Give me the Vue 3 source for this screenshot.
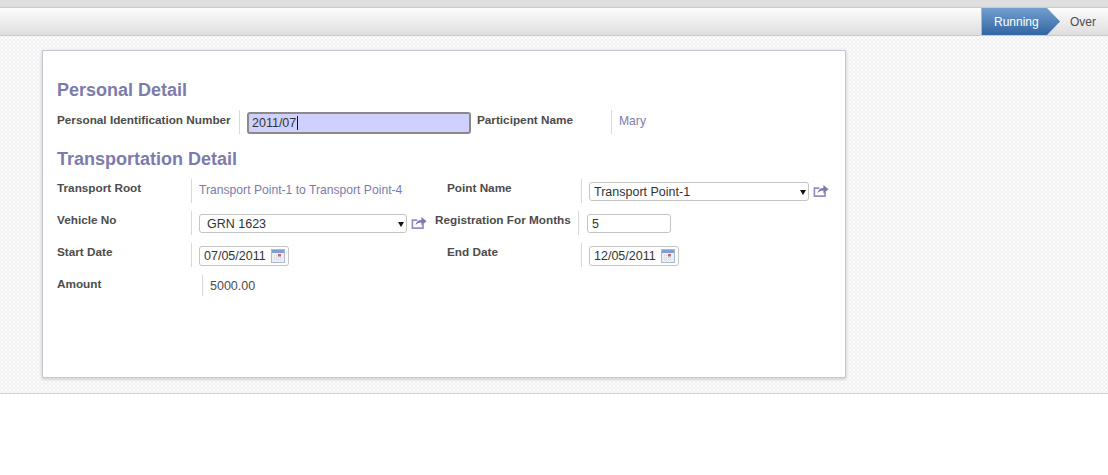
<template>
  <div class="page">
    <div class="topline"></div>
    <header class="statusbar">
      <ul class="steps">
        <li class="step active">Running</li>
        <li class="step">Over</li>
      </ul>
    </header>

    <main class="sheet-wrap">
      <section class="sheet">
        <h2>Personal Detail</h2>
        <div class="row first">
          <label class="lbl pin-label">Personal Identification Number</label>
          <div class="val pin-val">
            <div class="focus-box">
              <input class="pin-input" type="text" value="2011/07" />
              <span class="caret"></span>
            </div>
          </div>
          <label class="lbl name-label">Participent Name</label>
          <div class="val name-val"><span class="link">Mary</span></div>
        </div>

        <h2>Transportation Detail</h2>
        <div class="rows">
          <div class="row">
            <label class="lbl c1">Transport Root</label>
            <div class="val v1"><span class="link">Transport Point-1 to Transport Point-4</span></div>
            <label class="lbl c2">Point Name</label>
            <div class="val v2">
              <div class="sel-wrap">
                <select class="sel"><option>Transport Point-1</option></select>
              </div>
              <svg class="open" viewBox="0 0 16 14" width="16" height="14"><path d="M12 8v4.2H1.4V4.2h5" fill="none" stroke="#8f8fc4" stroke-width="1.7"/><path d="M4.5 9.2C5 5.8 7.6 4 10.4 4V1l5.2 4.3-5.2 4.3V6.6c-2.4 0-4.5.8-5.9 2.6z" fill="#7c7bad"/></svg>
            </div>
          </div>
          <div class="row">
            <label class="lbl c1">Vehicle No</label>
            <div class="val v1">
              <div class="sel-wrap">
                <select class="sel vehicle"><option>GRN 1623</option></select>
              </div>
              <svg class="open" viewBox="0 0 16 14" width="16" height="14"><path d="M12 8v4.2H1.4V4.2h5" fill="none" stroke="#8f8fc4" stroke-width="1.7"/><path d="M4.5 9.2C5 5.8 7.6 4 10.4 4V1l5.2 4.3-5.2 4.3V6.6c-2.4 0-4.5.8-5.9 2.6z" fill="#7c7bad"/></svg>
            </div>
            <label class="lbl c2 reg">Registration For Months</label>
            <div class="val v2 reg-val"><input class="num" type="text" value="5" /></div>
          </div>
          <div class="row">
            <label class="lbl c1">Start Date</label>
            <div class="val v1">
              <div class="date">
                <span>07/05/2011</span>
                <svg viewBox="0 0 14 14" width="14" height="14"><rect x=".5" y=".5" width="13" height="13" fill="#eceef2" stroke="#a9bad6"/><rect x="1" y="1" width="12" height="3" fill="#7f9fce"/><path d="M3 6.5h8M3 8.5h8M3 10.5h8" stroke="#cfd2d8" stroke-dasharray="1 1"/><rect x="7" y="5" width="3" height="2.5" fill="#bc6a78"/></svg>
              </div>
            </div>
            <label class="lbl c2">End Date</label>
            <div class="val v2">
              <div class="date">
                <span>12/05/2011</span>
                <svg viewBox="0 0 14 14" width="14" height="14"><rect x=".5" y=".5" width="13" height="13" fill="#eceef2" stroke="#a9bad6"/><rect x="1" y="1" width="12" height="3" fill="#7f9fce"/><path d="M3 6.5h8M3 8.5h8M3 10.5h8" stroke="#cfd2d8" stroke-dasharray="1 1"/><rect x="7" y="5" width="3" height="2.5" fill="#bc6a78"/></svg>
              </div>
            </div>
          </div>
          <div class="row last">
            <label class="lbl amount">Amount</label>
            <div class="val amount-val">5000.00</div>
          </div>
        </div>
      </section>
    </main>
  </div>
</template>

<script setup>
</script>

<style>
html,
body {
  margin: 0;
  background: #fff;
}
</style>

<style scoped>
.page {
  font-family: "Liberation Sans", Arial, sans-serif;
  font-size: 12.15px;
  color: #4c4c4c;
}

.topline {
  height: 7px;
  background: #dedede;
  border-bottom: 1px solid #cacaca;
}

.statusbar {
  height: 27px;
  border-bottom: 1px solid #cacaca;
  background: linear-gradient(180deg, #fcfcfc 0%, #dedede 100%);
  display: flex;
  justify-content: flex-end;
}

.steps {
  list-style: none;
  margin: 0;
  padding: 0;
  display: flex;
}

.step {
  width: 48px;
  box-sizing: border-box;
  line-height: 27px;
  padding: 1px 0 0 10px;
  font-size: 12px;
  color: #4c4c4c;
}

.step.active {
  width: 79px;
  padding-left: 12px;
  color: #fff;
  background: linear-gradient(180deg, #729fcf 0%, #3465a4 100%);
  clip-path: polygon(0 0, 66px 0, 79px 50%, 66px 100%, 0 100%);
  border-left: 1px solid #b5b5b5;
}

.sheet-wrap {
  height: 358px;
  box-sizing: border-box;
  padding: 14px 0 0 42px;
  border-bottom: 1px solid #d4d4d4;
  background-color: #fff;
  background-image: radial-gradient(circle at center, #fff 1px, #eee 1.5px, #fff 2.4px);
  background-size: 4px 4px;
}

.sheet {
  width: 804px;
  height: 328px;
  box-sizing: border-box;
  padding: 29px 14px 0;
  background: #fff;
  border: 1px solid #c6c6d2;
  box-shadow: 0 1px 3px rgba(0, 0, 0, 0.2);
}

h2 {
  margin: 0 0 9px;
  font-size: 18px;
  line-height: 21px;
  font-weight: bold;
  color: #7c7bad;
}

.row {
  display: flex;
  height: 24px;
}

.rows {
  display: flex;
  flex-direction: column;
  gap: 8px;
}

.row.first {
  margin-bottom: 15px;
}

.row.last {
  height: 21px;
}

.lbl {
  flex: none;
  font-size: 11.75px;
  font-weight: bold;
  line-height: 15px;
  padding-top: 1px;
  box-sizing: border-box;
  white-space: nowrap;
}

.first .lbl {
  padding-top: 2px;
}

.val {
  flex: none;
  box-sizing: border-box;
  border-left: 1px solid #d9d9d9;
  padding: 0 0 2px 7px;
  display: flex;
  align-items: center;
  white-space: nowrap;
  line-height: 15px;
}

.link {
  color: #7c7bad;
}

.pin-label {
  width: 182px;
}

.pin-val {
  width: 238px;
}

.focus-box {
  position: relative;
  line-height: 0;
  margin-top: 4px;
}

.pin-input {
  width: 224px;
  height: 22px;
  box-sizing: border-box;
  padding: 2px 3px;
  font: 12.5px "Liberation Sans", Arial, sans-serif;
  color: #333;
  background: #d0d0ff;
  border: 2px solid #8a8a8a;
  border-radius: 3px;
  outline: none;
}

.caret {
  position: absolute;
  left: 50px;
  top: 4px;
  width: 1px;
  height: 14px;
  background: #111;
}

.name-label {
  width: 134px;
}

.name-val {
  width: 120px;
}

.c1,
.c2 {
  width: 134px;
}

.v1 {
  width: 256px;
}

.reg {
  width: 143px;
  margin-left: -12px;
}

.reg-val {
  padding-left: 8px;
}

.v2 {
  width: 240px;
}

.sel-wrap {
  position: relative;
  line-height: 0;
  margin-top: 3px;
}

.sel-wrap::after {
  content: "";
  position: absolute;
  right: 3px;
  top: 8px;
  border-style: solid;
  border-width: 5px 3px 0;
  border-color: #111 transparent transparent;
  pointer-events: none;
}

.sel {
  appearance: none;
  width: 220px;
  height: 19px;
  box-sizing: border-box;
  padding: 0 0 0 4px;
  font: 12.5px "Liberation Sans", Arial, sans-serif;
  color: #333;
  background: #fff;
  border: 1px solid #c4c4c4;
  border-radius: 3px;
}

.sel.vehicle {
  width: 208px;
  padding-left: 7px;
}

.open {
  margin: 2px 0 0 4px;
  flex: none;
}

.num {
  width: 84px;
  height: 19px;
  box-sizing: border-box;
  margin-top: 3px;
  padding: 0 4px;
  font: 12.5px "Liberation Sans", Arial, sans-serif;
  color: #333;
  background: #fff;
  border: 1px solid #c4c4c4;
  border-radius: 3px;
  outline: none;
}

.date {
  width: 90px;
  height: 20px;
  box-sizing: border-box;
  margin-top: 4px;
  padding: 0 3px 0 4px;
  display: flex;
  align-items: center;
  justify-content: space-between;
  font-size: 12.5px;
  color: #333;
  background: #fff;
  border: 1px solid #c4c4c4;
  border-radius: 3px;
}

.amount {
  width: 145px;
}

.amount-val {
  width: 120px;
  font-size: 12.5px;
  padding-top: 3px;
}
</style>
